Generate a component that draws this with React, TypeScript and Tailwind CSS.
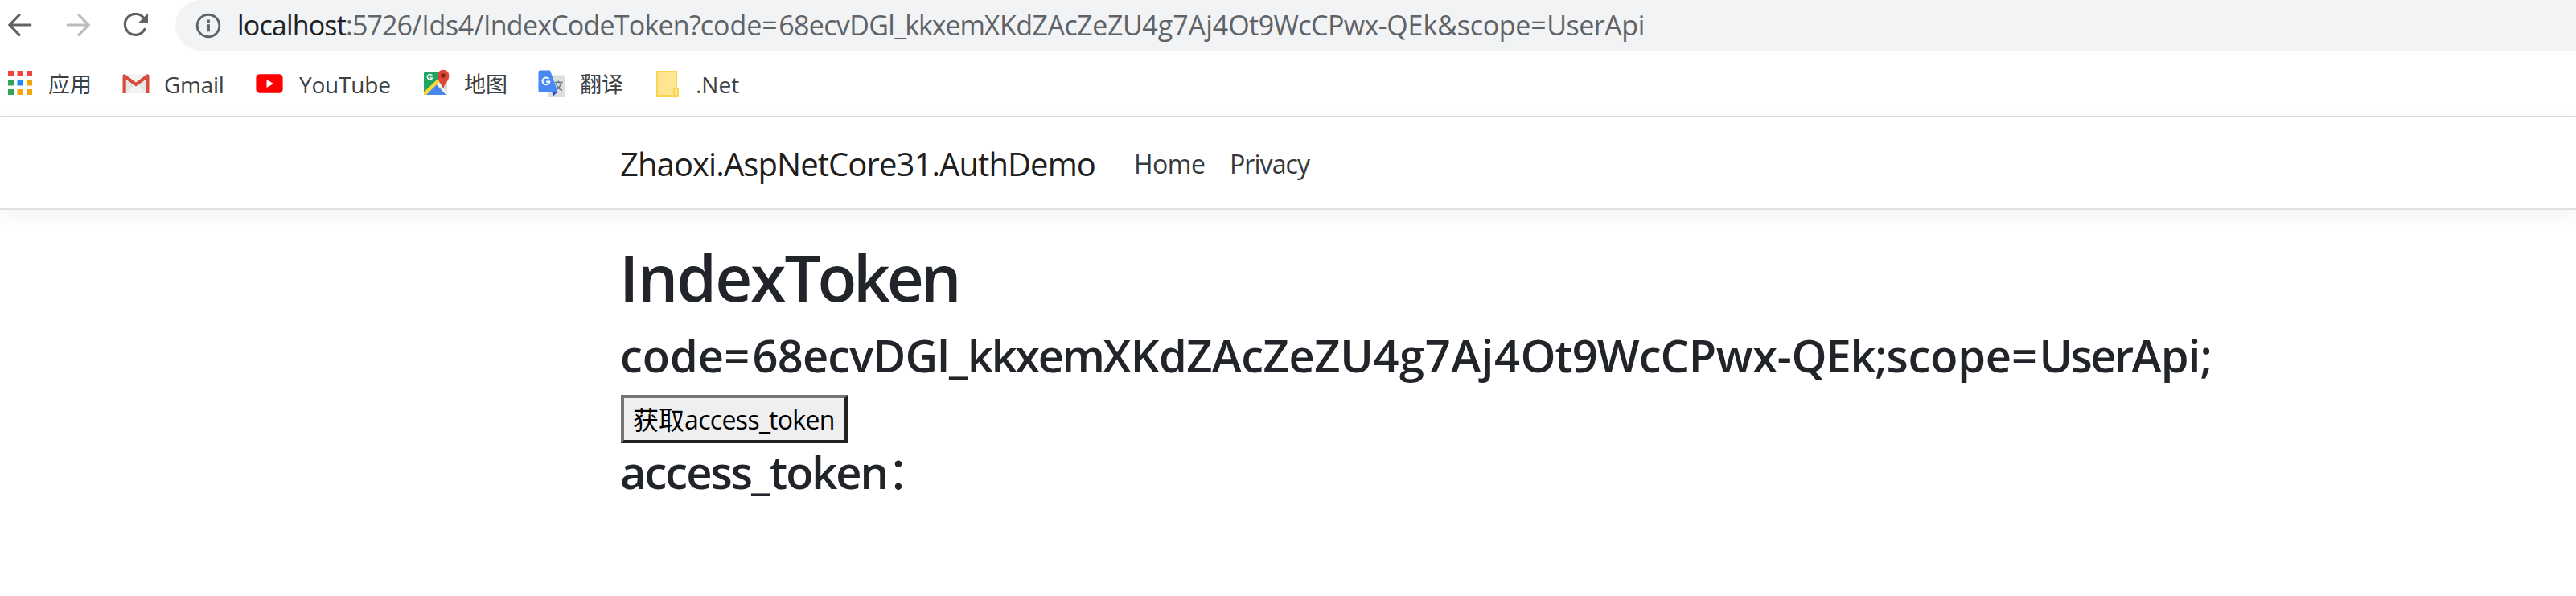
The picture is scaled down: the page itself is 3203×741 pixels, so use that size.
import React from "react";

const ui = "font-['Open_Sans','Noto_Sans_CJK_SC',sans-serif] whitespace-pre";

function Back({ flip, color }: { flip?: boolean; color: string }) {
  return (
    <svg width="30" height="30" viewBox="0 0 30 30" fill="none" stroke={color} strokeWidth="3.2" strokeLinecap="round" className={flip ? "-scale-x-100" : ""}>
      <path d="M27.8 15H2.4M14 2.7L2 15L14 27.300" />
    </svg>
  );
}

function Reload() {
  return (
    <svg width="32" height="30" viewBox="0 0 32 30" fill="none">
      <path d="M26.2 7.2A13 13 0 1 0 26.8 20.500" stroke="#5f6368" strokeWidth="3.2" strokeLinecap="round" />
      <path d="M31 0.5V13H18.3Z" fill="#5f6368" />
    </svg>
  );
}

function Info() {
  return (
    <svg width="32" height="32" viewBox="0 0 32 32" fill="none">
      <circle cx="16" cy="16" r="13.8" stroke="#5f6368" strokeWidth="2.9" />
      <path d="M14.3 8.6h3.6v3.3h-3.6zM14.3 14.3h3.6v9h-3.6z" fill="#5f6368" />
    </svg>
  );
}

function Apps() {
  const colors = ["#f4433c", "#f4433c", "#f4433c", "#34a35a", "#1e88f5", "#f2a60c", "#34a35a", "#f2a60c", "#f2a60c"];
  return (
    <svg width="30" height="30" viewBox="0 0 30 30">
      {colors.map((c, i) => (
        <rect key={i} x={(i % 3) * 11.5} y={Math.floor(i / 3) * 11.5} width="7" height="7" fill={c} />
      ))}
    </svg>
  );
}

function Gmail() {
  return (
    <svg width="34" height="26" viewBox="0 0 34 26">
      <rect x="1" y="1" width="32" height="24" rx="2" fill="#e6e6e6" />
      <path d="M5 25L17 13L29 25Z" fill="#f3f3f3" />
      <path d="M4 1H30L17 12Z" fill="#f4f4f4" />
      <path d="M0.5 3Q1 1 3 1.2L17 11.5L31 1.2Q33 1 33.5 3V25H29.3V7.8L17 16.6L4.7 7.8V25H0.5Z" fill="#da4a3f" />
    </svg>
  );
}

function YouTube() {
  return (
    <svg width="34" height="24" viewBox="0 0 34 24">
      <rect x="0.4" y="0.2" width="33.2" height="23.6" rx="4.5" fill="#f00" />
      <path d="M13.5 7L22.2 12L13.5 17Z" fill="#fff" />
    </svg>
  );
}

function Maps() {
  return (
    <svg width="34" height="34" viewBox="0 0 34 34">
      <clipPath id="tile"><rect x="1" y="3" width="29" height="29" rx="2.5" /></clipPath>
      <g clipPath="url(#tile)">
        <rect x="1" y="3" width="29" height="29" fill="#1fa463" />
        <path d="M30 8V32L15 17Z" fill="#d6d6d6" />
        <path d="M3 32L16 19L29 32Z" fill="#4a86f0" />
        <path d="M15.5 17.5L18 15.5L31 29V32H28.5Z" fill="#f3f3f3" />
        <path d="M0 29.5L20 10.5L22.5 13.5L3.5 32.5H0Z" fill="#fdd835" />
      </g>
      <path d="M25 25C24 18.5 17.8 15 17.8 8A7.3 7.3 0 0 1 32.4 8C32.4 15 26 18.5 25 25Z" fill="#de4638" />
      <circle cx="25" cy="8" r="2.7" fill="#7c231c" />
      <path d="M11.3 8.2A3.2 3.2 0 1 0 11.5 11H8.5" fill="none" stroke="#fff" strokeWidth="1.5" />
    </svg>
  );
}

function Translate() {
  return (
    <svg width="34" height="34" viewBox="0 0 34 34">
      <rect x="12" y="6.5" width="21.5" height="27" rx="2" fill="#dedede" />
      <path d="M20.5 15.5H30.5M25.5 13.5V15.5M29 15.5C28 20 25 23.5 21 25.5M22.5 17.5C24 21.5 27 24.5 30 25.5" fill="none" stroke="#607988" strokeWidth="1.5" />
      <path d="M17.5 27H24.5L18.5 33Z" fill="#3447b5" />
      <path d="M2.5 0.5H15L24.5 27.5H2.5Q0.5 27.5 0.5 25.5V2.5Q0.5 0.5 2.5 0.5Z" fill="#4788f2" />
      <path d="M13.5 11.2A4.4 4.4 0 1 0 14.3 14.5H10" fill="none" stroke="#fff" strokeWidth="2" />
    </svg>
  );
}

function Folder() {
  return (
    <svg width="28" height="32" viewBox="0 0 28 32" fill="#ffe591" stroke="#fad552" strokeWidth="2">
      <path d="M1 1H25V31H1Z" />
      <path d="M22 31V23Q22 21.5 24.5 21.5Q27 21.5 27 23V31Z" />
    </svg>
  );
}

type Run = [text: string, tracking: string];

function Runs({ items }: { items: Run[] }) {
  return <>{items.map(([text, tracking], i) => <span key={i} className={tracking}>{text}</span>)}</>;
}

const urlPath: Run[] = [
  [":5726", "tracking-[-0.94px]"],
  ["/Ids4/", "tracking-[-0.31px]"],
  ["IndexCodeToken?", "tracking-[-0.78px]"],
  ["code", "tracking-[-0.08px]"],
  ["=", "tracking-[1.56px]"],
  ["68ecvDGl", "tracking-[-0.65px]"],
  ["_", "tracking-[-1.89px]"],
  ["kkxem", "tracking-[-1.1px]"],
  ["XKdZAcZeZU", "tracking-[-0.49px]"],
  ["4g7Aj4", "tracking-[0.02px]"],
  ["Ot9WcCPwx-", "tracking-[-0.56px]"],
  ["QEk&", "tracking-[-0.1px]"],
  ["scope", "tracking-[-0.3px]"],
  ["=", "tracking-[0.56px]"],
  ["UserApi", "tracking-[-0.47px]"],
];

const codeLine: Run[] = [
  ["code", "tracking-[0px]"],
  ["=", "tracking-[3.4px]"],
  ["68ecvDGl_", "tracking-[-0.85px]"],
  ["kkxem", "tracking-[-2.44px]"],
  ["XKdZAc", "tracking-[-0.59px]"],
  ["ZeZU", "tracking-[-0.33px]"],
  ["4g7Aj4", "tracking-[0.54px]"],
  ["Ot9Wc", "tracking-[-1px]"],
  ["CPwx-", "tracking-[-0.29px]"],
  ["QEk;", "tracking-[-1.19px]"],
  ["scope", "tracking-[-0.2px]"],
  ["=", "tracking-[2.6px]"],
  ["User", "tracking-[-2.57px]"],
  ["Api;", "tracking-[-0.88px]"],
];

export default function App() {
  return (
    <div className={`w-[3203px] h-[741px] overflow-hidden bg-white ${ui}`}>
      <div className="h-[146px] border-b-2 border-[#dbdbe0]">
        <div className="flex h-[63px]">
          <div className="flex w-[218px] shrink-0 pl-[10px] pt-4">
            <Back color="#5f6368" />
            <div className="ml-[42px]"><Back flip color="#bbbcbe" /></div>
            <div className="ml-[41px]"><Reload /></div>
          </div>
          <div className="flex flex-1 rounded-l-full bg-[#f1f3f4] pl-[25px] pt-4">
            <Info />
            <div className="ml-[20px] -mt-[8px] h-[46px] text-[34px] leading-[46px] text-[#5f6368]">
              <span className="tracking-[-0.82px] text-[#202124]">localhost</span>
              <Runs items={urlPath} />
            </div>
          </div>
        </div>
        <div className="flex h-[81px] items-start pl-[10px] pt-[22px] text-[28px] leading-10 text-[#3c4043]">
          <div className="flex w-[142px]"><div className="mt-[3px] mr-[20px]"><Apps /></div><span className="text-[27px]">应用</span></div>
          <div className="flex w-[166px]"><div className="mt-[6px] mr-[18px]"><Gmail /></div><span className="tracking-[-0.28px]">Gmail</span></div>
          <div className="flex w-[208px]"><div className="mt-[7px] mr-[20px]"><YouTube /></div><span className="tracking-[-0.2px]">YouTube</span></div>
          <div className="flex w-[143px]"><div className="mt-[1px] mr-[17px]"><Maps /></div><span className="text-[27px]">地图</span></div>
          <div className="flex w-[147px]"><div className="mt-[2px] mr-[18px]"><Translate /></div><span className="text-[27px]">翻译</span></div>
          <div className="flex"><div className="mt-[3px] mr-[21px]"><Folder /></div><span>.Net</span></div>
        </div>
      </div>
      <div className="flex h-[115px] items-start border-b-2 border-[#dee2e6] pl-[771px] pt-[30px] shadow-[0_8px_24px_rgba(0,0,0,0.05)]">
        <span className="w-[639px] text-[40px] leading-[56px] tracking-[-0.91px] text-black/90">Zhaoxi.AspNetCore31.AuthDemo</span>
        <span className="mt-1 w-[119px] text-[32px] leading-[48px] tracking-[-0.49px] text-[#343a40]">Home</span>
        <span className="mt-1 text-[32px] leading-[48px] tracking-[-0.93px] text-[#343a40]">Privacy</span>
      </div>
      <div className="pl-[771px] pt-[35px] text-[#212529]">
        <h1 className="-ml-px h-[96px] text-[80px] leading-[96px] font-semibold"><Runs items={[["Index", "tracking-[-1.94px]"], ["Token", "tracking-[-4.2px]"]]} /></h1>
        <h3 className="mt-[15px] h-[68px] text-[56px] leading-[68px] font-semibold"><Runs items={codeLine} /></h3>
        <button className="mt-[16px] ml-px flex h-[60px] w-[282px] items-center border-4 border-t-[#767676] border-l-[#767676] border-r-[#212121] border-b-[#212121] bg-[#efefef] pl-[11px] pt-[2px] text-[32px] text-black">
          <span>获取<Runs items={[["access", "tracking-[-0.65px]"], ["_", "tracking-[-2.02px]"], ["token", "tracking-[-0.69px]"]]} /></span>
        </button>
        <h3 className="mt-[1px] h-[68px] text-[56px] leading-[68px] font-semibold"><Runs items={[["access", "tracking-[-1.98px]"], ["_", "tracking-[-0.79px]"], ["token", "tracking-[-2.03px]"], ["：", "font-normal"]]} /></h3>
      </div>
    </div>
  );
}
